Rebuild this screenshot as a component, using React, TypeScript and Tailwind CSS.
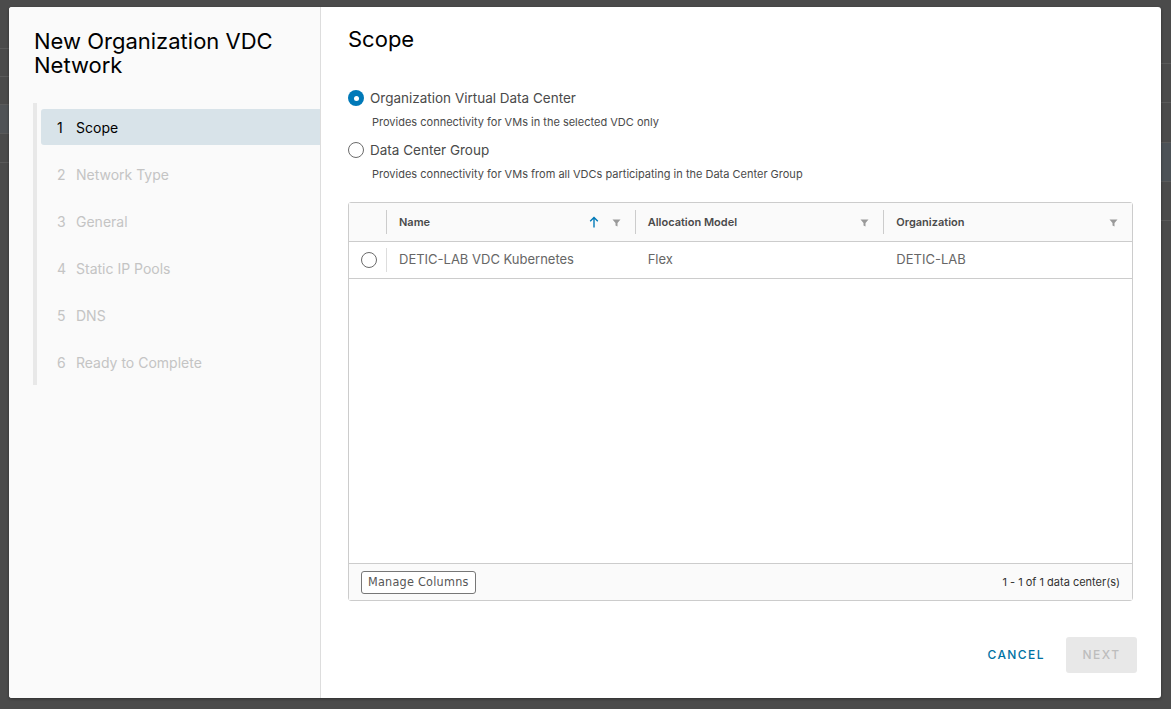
import { ReactNode } from "react"

const steps = [
  { n: 1, label: "Scope", active: true },
  { n: 2, label: "Network Type" },
  { n: 3, label: "General" },
  { n: 4, label: "Static IP Pools" },
  { n: 5, label: "DNS" },
  { n: 6, label: "Ready to Complete" },
]

const font = { fontFamily: "Inter, 'Open Sans', sans-serif" }

function Filter() {
  return (
    <svg width="9" height="9" viewBox="0 0 9 9" className="shrink-0">
      <path d="M0.5 1.5h8L5.5 5v3.5l-2-1V5z" fill="#9a9a9a" />
    </svg>
  )
}

function SortUp() {
  return (
    <svg width="10" height="12" viewBox="0 0 10 12" className="shrink-0">
      <path d="M5 1.5v10M1.2 5.2L5 1.5l3.8 3.7" stroke="#0079b8" strokeWidth="1.4" fill="none" />
    </svg>
  )
}

function Radio({ checked }: { checked?: boolean }) {
  return checked ? (
    <span className="flex h-4 w-4 shrink-0 items-center justify-center rounded-full bg-[#0079b8]">
      <span className="h-[5px] w-[5px] rounded-full bg-white" />
    </span>
  ) : (
    <span className="h-4 w-4 shrink-0 rounded-full border border-[#6b6b6b] bg-white" />
  )
}

function HeaderCell({ children, icons }: { children: ReactNode; icons: ReactNode }) {
  return (
    <div className="flex h-full flex-1 items-center">
      <span className="h-6 w-px bg-[#ccc]" />
      <span className="flex-1 pl-3 text-[11px] font-semibold text-[#4a4a4a]">{children}</span>
      <span className="flex items-center gap-[13px] pr-[14px]">{icons}</span>
    </div>
  )
}

export default function App() {
  return (
    <div className="relative h-[709px] w-full overflow-hidden bg-[#4b4b4b]" style={font}>
      {/* page behind the overlay */}
      <div className="flex h-full justify-between">
        <div className="w-[60px]">
          <div className="h-[49px] border-b border-[#5a5a5a]" />
          <div className="h-[28px] border-b border-[#5a5a5a]" />
          <div className="h-[28px] border-b border-[#5a5a5a]" />
          <div className="h-[29px] border-b border-[#5a5a5a] bg-[#505356]" />
          <div className="h-[29px] border-b border-[#5a5a5a]" />
        </div>
        <div className="w-[60px]">
          <div className="h-[64px] border-b border-[#5a5a5a]" />
          <div className="h-[39px] border-b border-[#5a5a5a]" />
          <div className="h-[40px] border-b border-[#5a5a5a]" />
          <div className="h-[39px] border-b border-[#5a5a5a] bg-[#4c5257]" />
          <div className="h-[39px] border-b border-[#5a5a5a]" />
        </div>
      </div>

      {/* modal */}
      <div className="absolute left-[9px] top-[7px] flex h-[691px] w-[1152px] overflow-hidden rounded-[3px] bg-white shadow-[0_1px_3px_rgba(0,0,0,0.4)]">
        <div className="flex w-[312px] shrink-0 flex-col border-r border-[#dddddd] bg-[#fafafa]">
          <h1 className="pl-[25px] pr-4 pt-[22px] text-[22px] font-normal leading-[24px] text-[#000]">
            New Organization VDC Network
          </h1>
          <div className="ml-[24px] mt-[26px] flex flex-col gap-[11px] border-l-4 border-[#e8e8e8] pb-[5px] pl-1 pt-[6px]">
            {steps.map((s) =>
              <div
                key={s.n}
                className={
                  s.active
                    ? "flex h-[36px] items-center rounded-l-[3px] bg-[#d8e3e9] pl-4 text-[14px] text-[#000]"
                    : "flex h-[36px] items-center pl-4 text-[14px] text-[#c4c4c4]"
                }
              >
                <span className="w-[19px]">{s.n}</span>
                <span>{s.label}</span>
              </div>
            )}
          </div>
        </div>

        <div className="flex flex-1 flex-col pl-[27px] pr-[24px] pt-[16px]">
          <h2 className="text-[22px] font-normal leading-[32px] text-[#000]">Scope</h2>

          <label className="mt-[33px] flex h-5 items-center gap-[6px]">
            <Radio checked />
            <span className="text-[13.5px] text-[#4a4a4a]">Organization Virtual Data Center</span>
          </label>
          <p className="mt-[6px] pl-6 text-[11px] leading-4 text-[#4a4a4a]">
            Provides connectivity for VMs in the selected VDC only
          </p>
          <label className="mt-[10px] flex h-5 items-center gap-[6px]">
            <Radio />
            <span className="text-[13.5px] text-[#4a4a4a]">Data Center Group</span>
          </label>
          <p className="mt-[6px] pl-6 text-[11px] leading-4 text-[#4a4a4a]">
            Provides connectivity for VMs from all VDCs participating in the Data Center Group
          </p>

          <div className="mr-[4px] mt-[20px] flex h-[399px] flex-col rounded-[3px] border border-[#cccccc]">
            <div className="flex h-[39px] items-center border-b border-[#cccccc] bg-[#fafafa]">
              <div className="w-[37px]" />
              <HeaderCell icons={<><SortUp /><Filter /></>}>Name</HeaderCell>
              <HeaderCell icons={<Filter />}>Allocation Model</HeaderCell>
              <HeaderCell icons={<Filter />}>Organization</HeaderCell>
            </div>
            <div className="flex h-[37px] items-center border-b border-[#cccccc] text-[13px] text-[#666]">
              <div className="flex w-[37px] justify-center pl-[3px]">
                <Radio />
              </div>
              <span className="h-6 w-px bg-[#dddddd]" />
              <span className="flex-1 pl-3">DETIC-LAB VDC Kubernetes</span>
              <span className="flex-1 pl-[13px]">Flex</span>
              <span className="flex-1 pl-[13px]">DETIC-LAB</span>
            </div>
            <div className="flex-1" />
            <div className="flex h-[37px] items-center justify-between border-t border-[#cccccc] bg-[#fafafa] pl-3 pr-3">
              <button
                className="h-[23px] rounded-[3px] border border-[#777] bg-white px-[6px] text-[12.5px] tracking-[0.02em] text-[#565656]"
                style={{ fontFamily: "'DejaVu Sans Condensed', 'DejaVu Sans', sans-serif", fontStretch: "condensed" }}
              >
                Manage Columns
              </button>
              <span className="text-[11px] text-[#313131]">1 - 1 of 1 data center(s)</span>
            </div>
          </div>

          <div className="mt-auto flex items-center justify-end gap-[9px] pb-[25px]">
            <button className="h-9 px-3 text-[12px] font-medium tracking-[0.12em] text-[#0072a3]">CANCEL</button>
            <button className="h-9 w-[71px] rounded-[3px] bg-[#e8e8e8] text-[12px] font-medium tracking-[0.12em] text-[#bdbdbd]">
              NEXT
            </button>
          </div>
        </div>
      </div>
    </div>
  )
}
